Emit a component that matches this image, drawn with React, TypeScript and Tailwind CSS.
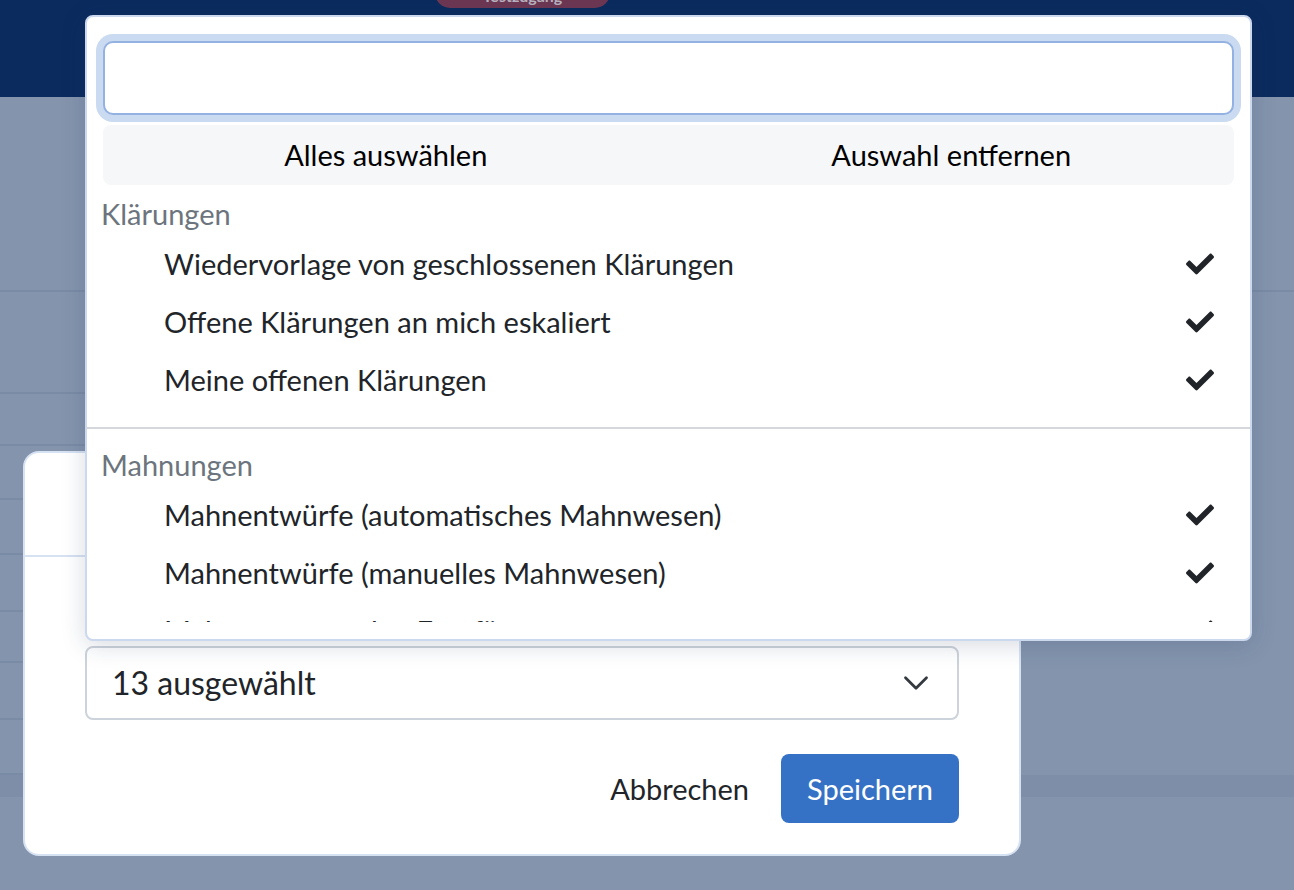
import React from "react";
import { FaCheck } from "react-icons/fa";

const groups = [
  {
    title: "Klärungen",
    items: [
      "Wiedervorlage von geschlossenen Klärungen",
      "Offene Klärungen an mich eskaliert",
      "Meine offenen Klärungen",
    ],
  },
  {
    title: "Mahnungen",
    items: [
      "Mahnentwürfe (automatisches Mahnwesen)",
      "Mahnentwürfe (manuelles Mahnwesen)",
      "Mahnungen an den Empfänger",
    ],
  },
];

// table rows of the page behind the overlay
const rows = [102, 52, 54, 55, 57, 51, 57, 55];

const Chevron = () => (
  <svg width="28" height="28" viewBox="0 0 16 16" fill="none">
    <path
      d="m2 5 6 6 6-6"
      stroke="#343a40"
      strokeWidth="1.6"
      strokeLinecap="round"
      strokeLinejoin="round"
    />
  </svg>
);

const App = () => {
  return (
    <div className="relative w-[1294px] h-[890px] overflow-hidden bg-[#8494ad] font-[Lato,sans-serif]">
      <header className="relative h-[97px] bg-[#0b2b5e]">
        <div className="absolute left-[435px] top-[-22px] w-[175px] h-[30px] rounded-full bg-[#6d3752] flex items-end justify-center text-[16px] font-bold text-[#b9b2bf]">
          Testzugang
        </div>
      </header>

      <div className="h-[195px] border-b-2 border-[#7a8ba5]" />
      <div className="w-[1000px]">
        {rows.map((h, i) => (
          <div
            key={i}
            style={{ height: h }}
            className="border-b-2 border-[#7a8ba5]"
          />
        ))}
      </div>
      <div className="h-[22px] bg-[#7e8ea8]" />

      {/* dialog */}
      <div className="absolute left-[23px] top-[451px] w-[998px] h-[405px] rounded-2xl bg-white border-2 border-[#d6e1f2] flex flex-col">
        <div className="h-[104px] border-b-2 border-[#d6e1f2]" />
        <div className="px-[60px] pt-[89px]">
          <div className="h-[74px] rounded-lg border-2 border-[#cdd3db] flex items-center justify-between pl-[25px] pr-[27px] text-[32px] text-[#212529]">
            <span>13 ausgewählt</span>
            <Chevron />
          </div>
          <div className="mt-[34px] flex justify-end items-center gap-[32px]">
            <span className="text-[29px] text-[#212529]">Abbrechen</span>
            <button className="h-[69px] w-[178px] rounded-lg bg-[#3572c6] text-white text-[29px]">
              Speichern
            </button>
          </div>
        </div>
      </div>

      {/* multiselect menu */}
      <div className="absolute left-[85px] top-[15px] w-[1167px] h-[626px] rounded-lg bg-white border-2 border-[#cbd8ee] shadow-[0_4px_24px_rgba(30,50,90,0.18)] flex flex-col">
        <div className="px-[16px] pt-[24px]">
          <div className="h-[74px] rounded-[10px] border-2 border-[#93b2e2] ring-[7px] ring-[#cadaf1] bg-white" />
          <div className="mt-[10px] h-[60px] rounded-lg bg-[#f6f7f9] grid grid-cols-2 items-center text-center text-[29px] text-black">
            <span>Alles auswählen</span>
            <span>Auswahl entfernen</span>
          </div>
        </div>
        <div className="h-[437px] overflow-hidden pt-[8px]">
          {groups.map((g, gi) => (
            <div
              key={g.title}
              className={gi > 0 ? "mt-[16px] border-t-2 border-[#d4d7db] pt-[15px]" : ""}
            >
              <div className="h-[44px] pl-[14px] pb-[2px] flex items-center text-[29px] text-[#6c757d]">
                {g.title}
              </div>
              {g.items.map((item) => (
                <div
                  key={item}
                  className="h-[58px] pl-[77px] pr-[36px] pb-[4px] flex items-center justify-between text-[29px] text-[#212529]"
                >
                  <span>{item}</span>
                  <FaCheck size={28} color="#212529" />
                </div>
              ))}
            </div>
          ))}
        </div>
      </div>
    </div>
  );
};

export default App;
